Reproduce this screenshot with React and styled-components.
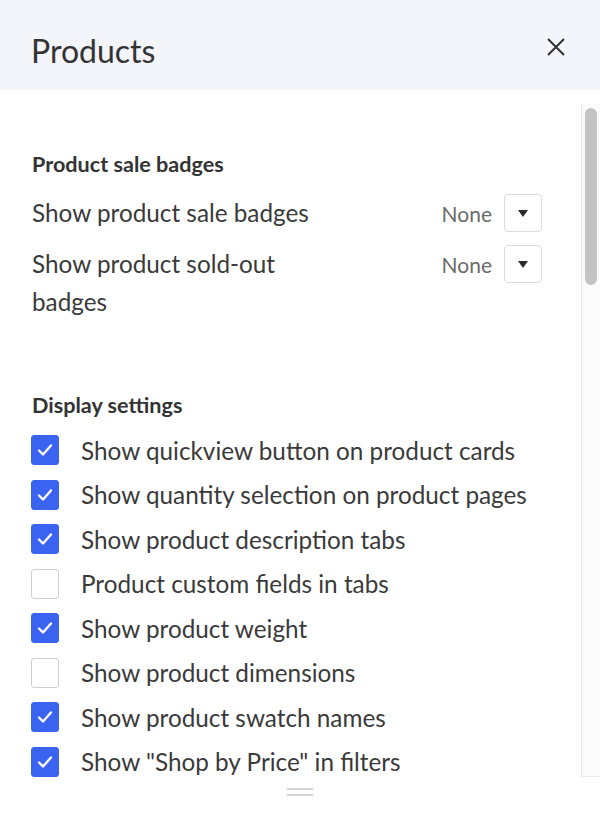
import React from "react";
import styled, { createGlobalStyle } from "styled-components";

const GlobalStyle = createGlobalStyle`
  html, body {
    margin: 0;
    padding: 0;
    background: #ffffff;
  }
  body {
    font-family: Lato, "Noto Sans", sans-serif;
    color: #333333;
  }
`;

const Panel = styled.div`
  width: 600px;
  height: 814px;
  display: flex;
  flex-direction: column;
  overflow: hidden;
  background: #fff;
`;

const Header = styled.header`
  height: 90px;
  flex: none;
  display: flex;
  align-items: center;
  justify-content: space-between;
  padding: 4px 32px 0 31px;
  background: #f4f4fb;
  box-sizing: border-box;
`;

const Title = styled.h1`
  margin: 6px 0 0;
  font-size: 32px;
  font-weight: 400;
  color: #333;
`;

const CloseButton = styled.button`
  border: 0;
  background: none;
  padding: 0;
  width: 24px;
  height: 24px;
  display: flex;
  align-items: center;
  justify-content: center;
  cursor: pointer;
`;

const Body = styled.div`
  height: 697px;
  flex: none;
  display: flex;
`;

const Content = styled.div`
  flex: 1;
  padding: 0 39px 0 32px;
  overflow: hidden;
`;

const Section = styled.section`
  padding-top: ${(p) => p.$top}px;
`;

const SectionTitle = styled.h2`
  margin: 0;
  font-size: 21.6px;
  font-weight: 700;
  line-height: 28px;
  color: #333;
`;

const SelectRow = styled.div`
  display: flex;
  justify-content: space-between;
  align-items: flex-start;
  margin-top: ${(p) => p.$gap}px;
`;

const RowLabel = styled.div`
  max-width: 300px;
  font-size: 24.3px;
  line-height: 38px;
  color: #3a3a3a;
`;

const SelectControl = styled.div`
  display: flex;
  align-items: center;
  gap: 12px;
`;

const SelectValue = styled.span`
  font-size: 21px;
  color: #6b6b6b;
`;

const CaretBox = styled.button`
  width: 38px;
  height: 38px;
  box-sizing: border-box;
  border: 1px solid #dcdcdc;
  border-radius: 4px;
  background: #fff;
  display: flex;
  align-items: center;
  justify-content: center;
  padding: 0;
`;

const CheckList = styled.div`
  margin-top: 9px;
`;

const CheckRow = styled.label`
  display: flex;
  align-items: center;
  gap: 22px;
  height: 44.5px;
  font-size: 24.3px;
  color: #3a3a3a;
`;

const Box = styled.span`
  width: 28px;
  height: 30px;
  flex: none;
  box-sizing: border-box;
  border-radius: 3px;
  margin-left: -1px;
  display: flex;
  align-items: center;
  justify-content: center;
  background: ${(p) => (p.$on ? "#3b63f2" : "#fff")};
  border: 1px solid ${(p) => (p.$on ? "#3b63f2" : "#cfcfcf")};
`;

const Track = styled.div`
  width: 19px;
  height: 673px;
  margin-top: 14px;
  box-sizing: border-box;
  border-left: 1px solid #e4e4e4;
  border-bottom: 1px solid #ececec;
  background: #fbfbfb;
  padding: 4px 3px 0 3px;
`;

const Thumb = styled.div`
  height: 177px;
  border-radius: 6px;
  background: #c3c3c3;
`;

const Footer = styled.div`
  flex: 1;
  display: flex;
  justify-content: center;
  padding-top: 1px;
`;

const Handle = styled.div`
  width: 26px;
  height: 8px;
  border-top: 2px solid #d4d4d8;
  border-bottom: 2px solid #d4d4d8;
  box-sizing: border-box;
`;

const Caret = () => (
  <svg width="10" height="7" viewBox="0 0 10 7">
    <path d="M0 0h10L5 7z" fill="#2b2b2b" />
  </svg>
);

const Tick = () => (
  <svg width="16" height="14" viewBox="0 0 16 14">
    <path
      d="M2 7.5l4 4L14 2.5"
      fill="none"
      stroke="#fff"
      strokeWidth="2.4"
      strokeLinecap="round"
      strokeLinejoin="round"
    />
  </svg>
);

const badges = [
  { label: "Show product sale badges", value: "None" },
  { label: "Show product sold-out badges", value: "None" },
];

const options = [
  { label: "Show quickview button on product cards", on: true },
  { label: "Show quantity selection on product pages", on: true },
  { label: "Show product description tabs", on: true },
  { label: "Product custom fields in tabs", on: false },
  { label: "Show product weight", on: true },
  { label: "Show product dimensions", on: false },
  { label: "Show product swatch names", on: true },
  { label: 'Show "Shop by Price" in filters', on: true },
];

export default function App() {
  return (
    <>
      <GlobalStyle />
      <Panel>
        <Header>
          <Title>Products</Title>
          <CloseButton aria-label="Close">
            <svg width="20" height="20" viewBox="0 0 20 20">
              <path d="M2 2l16 16M18 2L2 18" stroke="#333" strokeWidth="2" />
            </svg>
          </CloseButton>
        </Header>
        <Body>
          <Content>
            <Section $top={60}>
              <SectionTitle>Product sale badges</SectionTitle>
              {badges.map((b, i) => (
                <SelectRow key={b.label} $gap={i === 0 ? 16 : 13}>
                  <RowLabel>{b.label}</RowLabel>
                  <SelectControl>
                    <SelectValue>{b.value}</SelectValue>
                    <CaretBox>
                      <Caret />
                    </CaretBox>
                  </SelectControl>
                </SelectRow>
              ))}
            </Section>
            <Section $top={70}>
              <SectionTitle>Display settings</SectionTitle>
              <CheckList>
                {options.map((o) => (
                  <CheckRow key={o.label}>
                    <Box $on={o.on}>{o.on && <Tick />}</Box>
                    {o.label}
                  </CheckRow>
                ))}
              </CheckList>
            </Section>
          </Content>
          <Track>
            <Thumb />
          </Track>
        </Body>
        <Footer>
          <Handle />
        </Footer>
      </Panel>
    </>
  );
}
